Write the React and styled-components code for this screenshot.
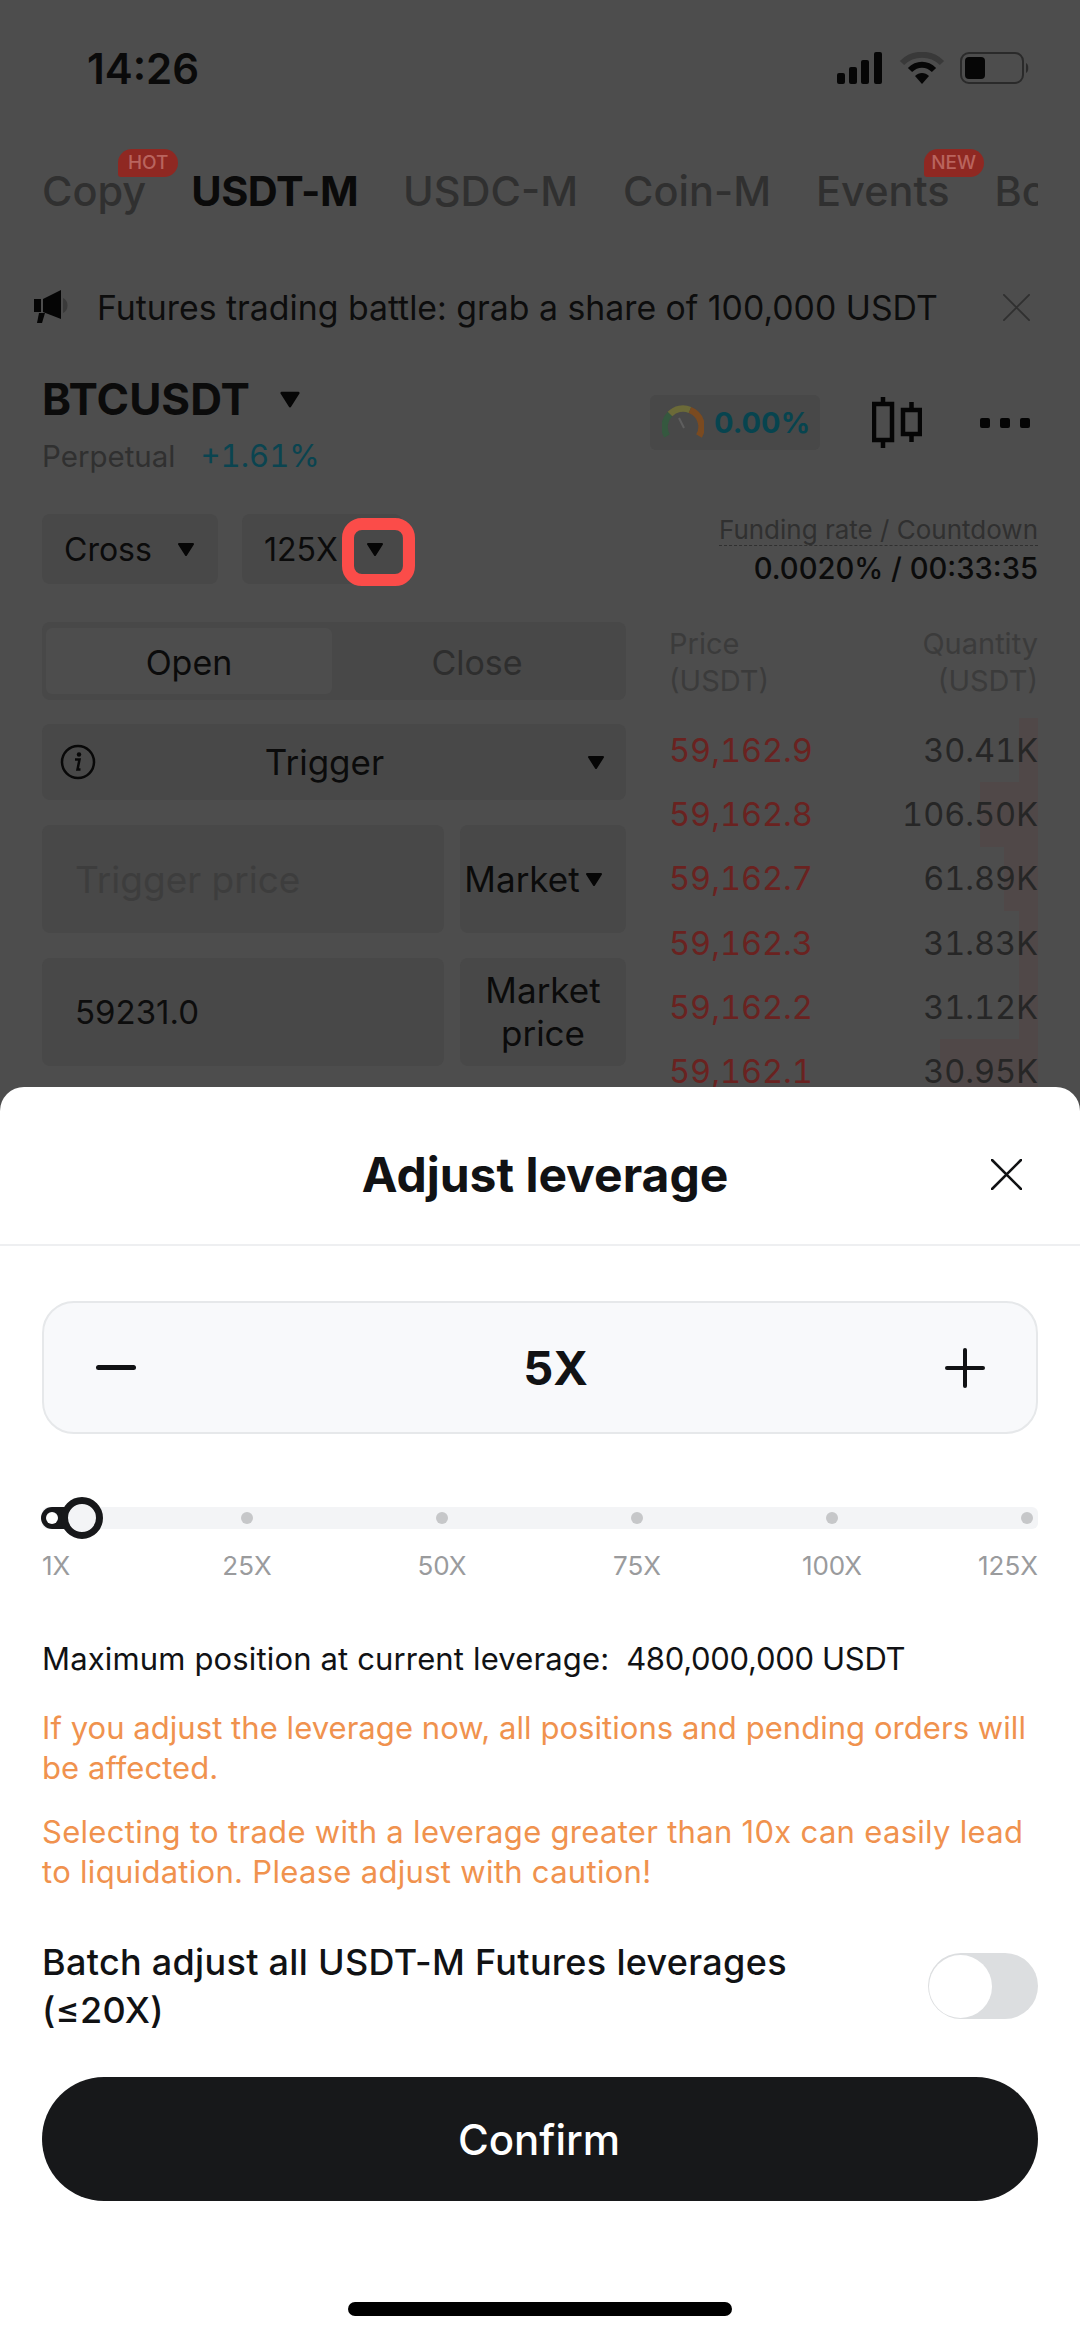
import React from 'react'
import styled, { createGlobalStyle } from 'styled-components'

const GlobalStyle = createGlobalStyle`
  html, body { margin: 0; padding: 0; background: #4d4d4d; }
  * { box-sizing: border-box; }
  body { font-family: Inter, "Liberation Sans", sans-serif; }
`

const Screen = styled.div`
  position: relative;
  width: 1080px;
  height: 2337px;
  overflow: hidden;
  background: #4d4d4d;
  color: #0b0b0b;
`

/* status bar */
const StatusBar = styled.div`
  height: 136px;
  padding: 0 50px 0 87px;
  display: flex;
  align-items: center;
  justify-content: space-between;
`
const Time = styled.div`
  font-size: 42px;
  font-weight: 600;
  color: #0a0a0a;
`
const StatusIcons = styled.div`
  display: flex;
  align-items: center;
  gap: 15px;
`

/* tabs */
const Tabs = styled.div`
  height: 110px;
  margin-right: 42px;
  padding-left: 42px;
  display: flex;
  align-items: center;
  gap: 45px;
  overflow: hidden;
`
const Tab = styled.div`
  position: relative;
  flex: none;
  font-size: 41.5px;
  font-weight: ${p => (p.$active ? 700 : 500)};
  letter-spacing: ${p => (p.$active ? '-0.5px' : '0')};
  color: ${p => (p.$active ? '#0a0a0a' : '#303030')};
`
const Badge = styled.span`
  position: absolute;
  top: -17px;
  right: ${p => p.$right}px;
  width: 60px;
  height: 28px;
  border-radius: 14px 14px 14px 3px;
  background: #8f2822;
  color: #b9645e;
  font-size: 19px;
  font-weight: 500;
  line-height: 28px;
  text-align: center;
`

/* notice */
const Notice = styled.div`
  height: 122px;
  padding: 0 50px 0 34px;
  display: flex;
  align-items: center;
`
const NoticeText = styled.div`
  flex: 1;
  margin-left: 26px;
  font-size: 33.8px;
  color: #0d0d0d;
  white-space: nowrap;
`

/* symbol row */
const SymbolRow = styled.div`
  height: 146px;
  padding: 0 50px 0 42px;
  display: flex;
  justify-content: space-between;
`
const SymbolInfo = styled.div`
  padding-top: 2px;
`
const SymbolName = styled.div`
  display: flex;
  align-items: center;
  gap: 28px;
  font-size: 44px;
  font-weight: 700;
  line-height: 58px;
`
const SymbolMeta = styled.div`
  margin-top: 8px;
  display: flex;
  gap: 25px;
  align-items: center;
  font-size: 29.5px;
  line-height: 40px;
  color: #303030;
`
const Change = styled.span`
  color: #0a4450;
  font-size: 31px;
  font-variant-numeric: tabular-nums;
`
const SymbolTools = styled.div`
  margin-top: 27px;
  height: 55px;
  display: flex;
  align-items: center;
`
const Sentiment = styled.div`
  width: 170px;
  height: 55px;
  padding-left: 12px;
  border-radius: 6px;
  background: #484848;
  display: flex;
  align-items: center;
  gap: 10px;
  font-size: 29px;
  font-weight: 700;
  color: #07444f;
`
const ToolGap = styled.div`
  width: 52px;
`
const Dots = styled.div`
  margin-left: 58px;
  display: flex;
  gap: 10px;
`
const Dot = styled.span`
  width: 10px;
  height: 10px;
  background: #050505;
  border-radius: 2px;
`

/* controls */
const Controls = styled.div`
  height: 108px;
  padding: 0 42px;
  display: flex;
  justify-content: space-between;
`
const ChipGroup = styled.div`
  display: flex;
  gap: 24px;
`
const Chip = styled.div`
  width: ${p => p.$w}px;
  height: 70px;
  padding-left: 22px;
  border-radius: 8px;
  background: #484848;
  display: flex;
  align-items: center;
  gap: ${p => p.$gap}px;
  font-size: 32px;
`
const Highlight = styled.div`
  position: absolute;
  left: 342px;
  top: 518px;
  width: 73px;
  height: 68px;
  border: 12px solid #fb4c49;
  border-radius: 20px;
`
const Funding = styled.div`
  text-align: right;
`
const FundingLabel = styled.div`
  display: inline-block;
  font-size: 26px;
  line-height: 31px;
  color: #303030;
  border-bottom: 1px dashed #303030;
`
const FundingValue = styled.div`
  margin-top: 4px;
  font-size: 29.2px;
  font-weight: 500;
  line-height: 38px;
`

/* trade form + order book */
const Trade = styled.div`
  padding: 0 42px;
  display: grid;
  grid-template-columns: 584px 369px;
  justify-content: space-between;
`
const Form = styled.div`
  display: flex;
  flex-direction: column;
`
const Switch = styled.div`
  height: 78px;
  padding: 6px 4px;
  border-radius: 8px;
  background: #484848;
  display: grid;
  grid-template-columns: 286px 1fr;
  font-size: 34px;
`
const SwitchItem = styled.div`
  border-radius: 6px;
  display: flex;
  align-items: center;
  justify-content: center;
  padding-top: 2px;
  background: ${p => (p.$active ? '#4d4d4d' : 'transparent')};
  color: ${p => (p.$active ? '#0b0b0b' : '#2e2e2e')};
`
const TypeSelect = styled.div`
  margin-top: 24px;
  height: 76px;
  padding: 0 20px 0 18px;
  border-radius: 8px;
  background: #484848;
  display: flex;
  align-items: center;
  justify-content: space-between;
  font-size: 35px;
`
const TypeLabel = styled.span`
  margin-right: 33px;
`
const InputRow = styled.div`
  margin-top: 25px;
  display: grid;
  grid-template-columns: 402px 166px;
  gap: 16px;
  height: 108px;
`
const Input = styled.div`
  border-radius: 8px;
  background: #484848;
  padding-left: 33px;
  display: flex;
  align-items: center;
  font-size: ${p => (p.$ghost ? 37 : 33)}px;
  color: ${p => (p.$ghost ? '#3d3d3d' : '#0d0d0d')};
`
const Side = styled.div`
  border-radius: 8px;
  background: #484848;
  display: flex;
  align-items: center;
  justify-content: center;
  gap: 4px;
  padding-right: ${p => p.$shift || 0}px;
  text-align: center;
  font-size: 35px;
  line-height: 43px;
`
const Book = styled.div`
  display: flex;
  flex-direction: column;
`
const BookHead = styled.div`
  height: 96px;
  padding-top: 3px;
  display: flex;
  justify-content: space-between;
  font-size: 29px;
  line-height: 37px;
  color: #3b3b3b;
`
const BookRow = styled.div`
  height: 64.3px;
  display: flex;
  align-items: center;
  justify-content: space-between;
  font-size: 32.5px;
  font-variant-numeric: tabular-nums;
  color: #262626;
  background: linear-gradient(to left, #504848 ${p => p.$depth}px, transparent ${p => p.$depth}px);
`
const BookPrice = styled.span`
  color: #6a2220;
`

/* bottom sheet */
const Sheet = styled.div`
  position: absolute;
  left: 0;
  right: 0;
  bottom: 0;
  height: 1250px;
  background: #fff;
  border-radius: 24px 24px 0 0;
  color: #111214;
`
const SheetHeader = styled.div`
  position: relative;
  height: 159px;
  border-bottom: 2px solid #eeeff1;
  display: flex;
  align-items: center;
  justify-content: center;
  padding: 18px 0 0 10px;
  font-size: 48px;
  font-weight: 700;
`
const CloseBtn = styled.div`
  position: absolute;
  right: 58px;
  top: 72px;
  display: flex;
`
const SheetBody = styled.div`
  padding: 55px 42px 0;
`
const Stepper = styled.div`
  height: 133px;
  padding: 0 50px 0 51px;
  border: 2px solid #e6e8ea;
  border-radius: 32px;
  background: #f8f9fb;
  display: flex;
  align-items: center;
  justify-content: space-between;
`
const StepValue = styled.div`
  padding-left: 30px;
  font-size: 47px;
  font-weight: 700;
`
const Slider = styled.div`
  position: relative;
  margin-top: 73px;
  height: 22px;
  padding: 0 5px 0 4px;
  border-radius: 6px;
  background: #f3f4f6;
  display: flex;
  align-items: center;
  justify-content: space-between;
`
const Tick = styled.span`
  width: 12px;
  height: 12px;
  border-radius: 50%;
  background: ${p => (p.$hidden ? 'transparent' : '#c6c7c9')};
`
const Knob = styled.div`
  position: absolute;
  left: -1px;
  top: -11px;
  display: flex;
`
const Marks = styled.div`
  margin-top: 20px;
  display: grid;
  grid-template-columns: 107.5px repeat(4, 195px) 1fr;
  font-size: 26px;
  line-height: 34px;
  color: #9a9b9d;
`
const Mark = styled.span`
  text-align: ${p => p.$align || 'center'};
`
const MaxPosition = styled.div`
  margin-top: 56px;
  font-size: 31px;
  line-height: 40px;
  letter-spacing: -0.3px;
  white-space: pre;
`
const MaxLabel = styled.span`
  letter-spacing: 0.15px;
`
const Warning = styled.div`
  margin-top: ${p => p.$gap}px;
  font-size: 31px;
  line-height: 40px;
  letter-spacing: ${p => p.$spacing}px;
  color: #f0924e;
`
const BatchRow = styled.div`
  margin-top: 46px;
  display: flex;
  align-items: center;
  justify-content: space-between;
`
const BatchText = styled.div`
  width: 800px;
  font-size: 36px;
  font-weight: 500;
  line-height: 48px;
  letter-spacing: 0.3px;
`
const Toggle = styled.div`
  width: 110px;
  height: 66px;
  border-radius: 33px;
  background: #dcdee0;
  display: flex;
  align-items: center;
  padding-left: 1px;
`
const ToggleKnob = styled.span`
  width: 63px;
  height: 63px;
  border-radius: 50%;
  background: #fff;
`
const Confirm = styled.div`
  margin-top: 43px;
  height: 124px;
  border-radius: 62px;
  background: #17181a;
  color: #fff;
  display: flex;
  align-items: center;
  justify-content: center;
  font-size: 42px;
  font-weight: 500;
  padding-right: 2px;
`
const HomeBar = styled.div`
  margin: 101px auto 0;
  width: 384px;
  height: 14px;
  border-radius: 7px;
  background: #000;
`

function Caret({ size = 20, color = '#060606' }) {
  return (
    <svg width={size} height={size} viewBox="0 0 20 20">
      <path d="M3 4h14a1 1 0 0 1 .9 1.5l-7 11a1 1 0 0 1-1.8 0l-7-11A1 1 0 0 1 3 4z" fill={color} />
    </svg>
  )
}

function SignalIcon() {
  return (
    <svg width="48" height="32" viewBox="0 0 48 32">
      <rect x="1" y="21" width="8" height="11" rx="2" fill="#060606" />
      <rect x="13" y="15" width="8" height="17" rx="2" fill="#060606" />
      <rect x="25" y="8" width="8" height="24" rx="2" fill="#060606" />
      <rect x="38" y="0" width="8" height="32" rx="2" fill="#060606" />
    </svg>
  )
}

function WifiIcon() {
  return (
    <svg width="46" height="32" viewBox="0 0 46 32" fill="none">
      <path d="M3 11C14 0 32 0 43 11" stroke="#393939" strokeWidth="6" />
      <path d="M11 18C18 11 28 11 35 18" stroke="#060606" strokeWidth="6" />
      <path d="M23 32l-7-8c4-4 10-4 14 0z" fill="#060606" />
    </svg>
  )
}

function BatteryIcon() {
  return (
    <svg width="70" height="32" viewBox="0 0 70 32" fill="none">
      <rect x="1" y="1" width="62" height="30" rx="8" stroke="#2a2a2a" strokeWidth="2" />
      <rect x="5" y="5" width="20" height="22" rx="4" fill="#060606" />
      <path d="M66 11c3 1 3 9 0 10z" fill="#2a2a2a" />
    </svg>
  )
}

function MegaphoneIcon() {
  return (
    <svg width="37" height="34" viewBox="0 0 37 34">
      <rect x="0" y="9" width="7" height="13" fill="#050505" />
      <path d="M9 9L27 0v29L9 22z" fill="#050505" />
      <path d="M5 23h6l-3 10H3z" fill="#050505" />
      <path d="M29 8c6 2 6 13 0 15z" fill="#3a3a3a" />
    </svg>
  )
}

function CrossIcon({ size, color, weight = 2 }) {
  return (
    <svg width={size} height={size} viewBox="0 0 30 30" fill="none">
      <path d="M1 1l28 28M29 1L1 29" stroke={color} strokeWidth={weight} strokeLinecap="round" />
    </svg>
  )
}

function GaugeIcon() {
  return (
    <svg width="42" height="36" viewBox="0 0 42 36" fill="none">
      <path d="M5 31A18 18 0 0 1 8 9" stroke="#35583f" strokeWidth="6.5" />
      <path d="M8 9A18 18 0 0 1 28 5" stroke="#6b6a38" strokeWidth="6.5" />
      <path d="M28 5A18 18 0 0 1 37 31" stroke="#7a4a20" strokeWidth="6.5" />
      <path d="M17 13l5 10" stroke="#5e5e5e" strokeWidth="2" />
    </svg>
  )
}

function CandleIcon() {
  return (
    <svg width="50" height="51" viewBox="0 0 50 51" fill="none" stroke="#050505" strokeWidth="4.5">
      <rect x="2" y="7" width="18" height="36" />
      <path d="M11 0v7M11 43v8" />
      <rect x="31" y="13" width="17" height="24" />
      <path d="M39.500 5v8M39.500 37v8" />
    </svg>
  )
}

function InfoIcon() {
  return (
    <svg width="36" height="36" viewBox="0 0 36 36" fill="none">
      <circle cx="18" cy="18" r="16" stroke="#080808" strokeWidth="2.500" />
      <circle cx="19" cy="10.500" r="2.200" fill="#080808" />
      <path d="M15 15.500h4.500l-2 10h3" stroke="#080808" strokeWidth="2.500" />
    </svg>
  )
}

function MinusIcon() {
  return (
    <svg width="42" height="42" viewBox="0 0 42 42">
      <rect x="1" y="18" width="40" height="5" rx="2.500" fill="#111214" />
    </svg>
  )
}

function PlusIcon() {
  return (
    <svg width="42" height="42" viewBox="0 0 42 42">
      <rect x="1" y="19" width="40" height="4" rx="2" fill="#111214" />
      <rect x="19" y="1" width="4" height="40" rx="2" fill="#111214" />
    </svg>
  )
}

function KnobIcon() {
  return (
    <svg width="62" height="44" viewBox="0 0 62 44">
      <path d="M11 11h20v22H11a11 11 0 0 1 0-22z" fill="#17181a" />
      <circle cx="11" cy="22" r="6" fill="#fff" />
      <circle cx="41" cy="22" r="17.500" fill="#f3f4f6" stroke="#17181a" strokeWidth="7" />
    </svg>
  )
}

const ORDERS = [
  { price: '59,162.9', qty: '30.41K', depth: 19 },
  { price: '59,162.8', qty: '106.50K', depth: 58 },
  { price: '59,162.7', qty: '61.89K', depth: 34 },
  { price: '59,162.3', qty: '31.83K', depth: 19 },
  { price: '59,162.2', qty: '31.12K', depth: 19 },
  { price: '59,162.1', qty: '30.95K', depth: 98 },
]

const MARKS = ['25X', '50X', '75X', '100X']

export default function App() {
  return (
    <Screen>
      <GlobalStyle />
      <StatusBar>
        <Time>14:26</Time>
        <StatusIcons>
          <SignalIcon />
          <WifiIcon />
          <BatteryIcon />
        </StatusIcons>
      </StatusBar>

      <Tabs>
        <Tab>Copy<Badge $right={-32}>HOT</Badge></Tab>
        <Tab $active>USDT-M</Tab>
        <Tab>USDC-M</Tab>
        <Tab>Coin-M</Tab>
        <Tab>Events<Badge $right={-34}>NEW</Badge></Tab>
        <Tab>Bots</Tab>
      </Tabs>

      <Notice>
        <MegaphoneIcon />
        <NoticeText>Futures trading battle: grab a share of 100,000 USDT</NoticeText>
        <CrossIcon size={27} color="#303030" />
      </Notice>

      <SymbolRow>
        <SymbolInfo>
          <SymbolName>BTCUSDT <Caret size={24} /></SymbolName>
          <SymbolMeta>Perpetual <Change>+1.61%</Change></SymbolMeta>
        </SymbolInfo>
        <SymbolTools>
          <Sentiment><GaugeIcon />0.00%</Sentiment>
          <ToolGap />
          <CandleIcon />
          <Dots><Dot /><Dot /><Dot /></Dots>
        </SymbolTools>
      </SymbolRow>

      <Controls>
        <ChipGroup>
          <Chip $w={176} $gap={24}>Cross <Caret /></Chip>
          <Chip $w={160} $gap={27}>125X <Caret /></Chip>
        </ChipGroup>
        <Funding>
          <FundingLabel>Funding rate / Countdown</FundingLabel>
          <FundingValue>0.0020% / 00:33:35</FundingValue>
        </Funding>
      </Controls>
      <Highlight />

      <Trade>
        <Form>
          <Switch>
            <SwitchItem $active>Open</SwitchItem>
            <SwitchItem>Close</SwitchItem>
          </Switch>
          <TypeSelect>
            <InfoIcon />
            <TypeLabel>Trigger</TypeLabel>
            <Caret />
          </TypeSelect>
          <InputRow>
            <Input $ghost>Trigger price</Input>
            <Side $shift={18}>Market<Caret /></Side>
          </InputRow>
          <InputRow>
            <Input>59231.0</Input>
            <Side>Market<br />price</Side>
          </InputRow>
        </Form>
        <Book>
          <BookHead>
            <span>Price<br />(USDT)</span>
            <Mark $align="right">Quantity<br />(USDT)</Mark>
          </BookHead>
          {ORDERS.map(order => (
            <BookRow key={order.price} $depth={order.depth}>
              <BookPrice>{order.price}</BookPrice>
              <span>{order.qty}</span>
            </BookRow>
          ))}
        </Book>
      </Trade>

      <Sheet>
        <SheetHeader>
          Adjust leverage
          <CloseBtn><CrossIcon size={31} color="#111214" weight={2.5} /></CloseBtn>
        </SheetHeader>
        <SheetBody>
          <Stepper>
            <MinusIcon />
            <StepValue>5X</StepValue>
            <PlusIcon />
          </Stepper>
          <Slider>
            <Tick $hidden />
            {[0, 1, 2, 3, 4].map(i => <Tick key={i} />)}
            <Knob><KnobIcon /></Knob>
          </Slider>
          <Marks>
            <Mark $align="left">1X</Mark>
            {MARKS.map(label => <Mark key={label}>{label}</Mark>)}
            <Mark $align="right">125X</Mark>
          </Marks>
          <MaxPosition><MaxLabel>Maximum position at current leverage:</MaxLabel>  480,000,000 USDT</MaxPosition>
          <Warning $gap={29} $spacing={0.05}>If you adjust the leverage now, all positions and pending orders will be affected.</Warning>
          <Warning $gap={24} $spacing={0.3}>Selecting to trade with a leverage greater than 10x can easily lead to liquidation. Please adjust with caution!</Warning>
          <BatchRow>
            <BatchText>Batch adjust all USDT-M Futures leverages (≤20X)</BatchText>
            <Toggle><ToggleKnob /></Toggle>
          </BatchRow>
          <Confirm>Confirm</Confirm>
          <HomeBar />
        </SheetBody>
      </Sheet>
    </Screen>
  )
}
